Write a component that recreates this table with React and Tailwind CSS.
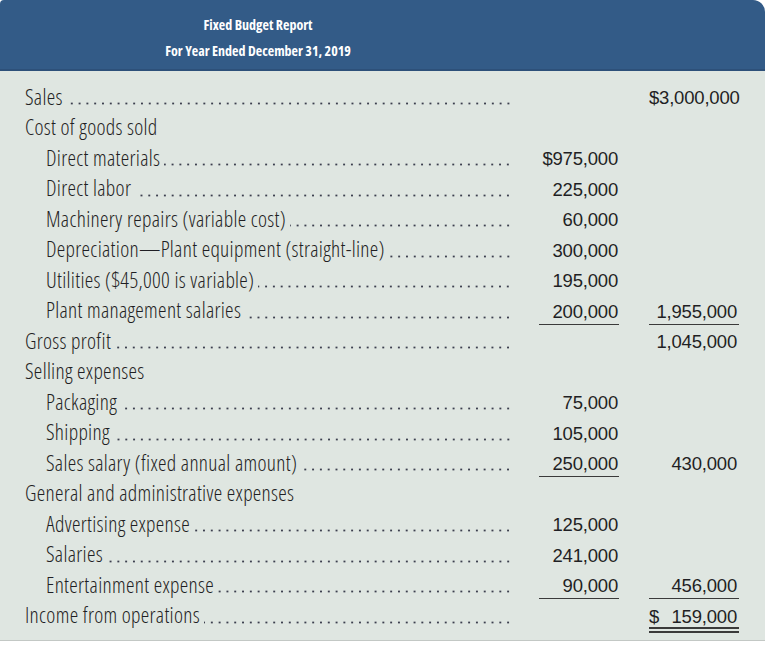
import React from 'react';

const rows = [
  {label: 'Sales', dots: true, total: '$3,000,000'},
  {label: 'Cost of goods sold'},
  {label: 'Direct materials', indent: true, dots: true, amount: '$975,000'},
  {label: 'Direct labor', indent: true, dots: true, amount: '225,000'},
  {label: 'Machinery repairs (variable cost)', indent: true, dots: true, amount: '60,000'},
  {label: 'Depreciation—Plant equipment (straight-line)', indent: true, dots: true, amount: '300,000'},
  {label: 'Utilities ($45,000 is variable)', indent: true, dots: true, amount: '195,000'},
  {label: 'Plant management salaries', indent: true, dots: true, amount: '200,000', line: true, total: '1,955,000', totalLine: true},
  {label: 'Gross profit', dots: true, total: '1,045,000'},
  {label: 'Selling expenses'},
  {label: 'Packaging', indent: true, dots: true, amount: '75,000'},
  {label: 'Shipping', indent: true, dots: true, amount: '105,000'},
  {label: 'Sales salary (fixed annual amount)', indent: true, dots: true, amount: '250,000', line: true, total: '430,000'},
  {label: 'General and administrative expenses'},
  {label: 'Advertising expense', indent: true, dots: true, amount: '125,000'},
  {label: 'Salaries', indent: true, dots: true, amount: '241,000'},
  {label: 'Entertainment expense', indent: true, dots: true, amount: '90,000', line: true, total: '456,000', totalLine: true},
  {label: 'Income from operations', dots: true, total: '159,000', dollar: true, doubleLine: true},
];

function Row({row}) {
  return (
    <div className="flex h-[30.5px] leading-[30.5px] pl-[25px]">
      {/* label + dot leader */}
      <div className={'flex w-[487px] tracking-[0.3px] pt-[1px] box-border ' + (row.indent ? 'pl-[21px]' : '')}>
        <span className="whitespace-nowrap">{row.label}</span>
        {row.dots && (
          <span className="flex-1 ml-[4px] bg-[radial-gradient(circle,#3c3f4e_0.8px,transparent_1.3px)] bg-[length:7.8px_3px] bg-repeat-x bg-[position:right_0_bottom_6px]" />
        )}
      </div>
      <div className="w-[27px]" />
      {/* first amount column */}
      <div
        className={
          'w-[80px] text-right pr-[1px] pt-[2.5px] box-border font-["Liberation_Sans",sans-serif] font-normal text-[18.5px] tracking-[-0.2px] font-stretch-normal ' +
          (row.line ? 'border-b-[1.5px] border-[#3a3a3a]' : '')
        }
      >
        {row.amount}
      </div>
      <div className="w-[30px]" />
      {/* totals column */}
      <div
        className={
          'w-[90px] flex justify-between pr-[2px] pt-[2.5px] box-border font-["Liberation_Sans",sans-serif] font-normal text-[18.5px] tracking-[-0.2px] font-stretch-normal ' +
          (row.totalLine ? 'border-b-[1.5px] border-[#3a3a3a]' : '') +
          (row.doubleLine ? 'h-[34px] border-b-[6.5px] border-double border-[#3a3a3a]' : '')
        }
      >
        <span>{row.dollar ? '$' : ''}</span>
        <span>{row.total}</span>
      </div>
    </div>
  );
}

export default function App() {
  return (
    <div className="bg-white w-[771px] h-[646px] font-['Open_Sans',sans-serif]">
      <div className="w-[765px] rounded-tl-[4px] rounded-tr-[12px] overflow-hidden">
        <div className="h-[71px] bg-[#335b87] border-b-2 border-[#2d5079] box-border">
          <div className="w-[516px] pt-[11.5px] text-center text-white font-bold text-[14px] leading-[26px] font-stretch-condensed">
            <div>Fixed Budget Report</div>
            <div>For Year Ended December 31, 2019</div>
          </div>
        </div>
        <div className="bg-[#dfe6e1] pt-[9.5px] pb-[10px] border-b border-[#c3c8c5] text-[21.5px] font-light text-[#1f1f24] font-stretch-condensed">
          {rows.map((row, i) => (
            <Row key={i} row={row} />
          ))}
        </div>
      </div>
    </div>
  );
}
